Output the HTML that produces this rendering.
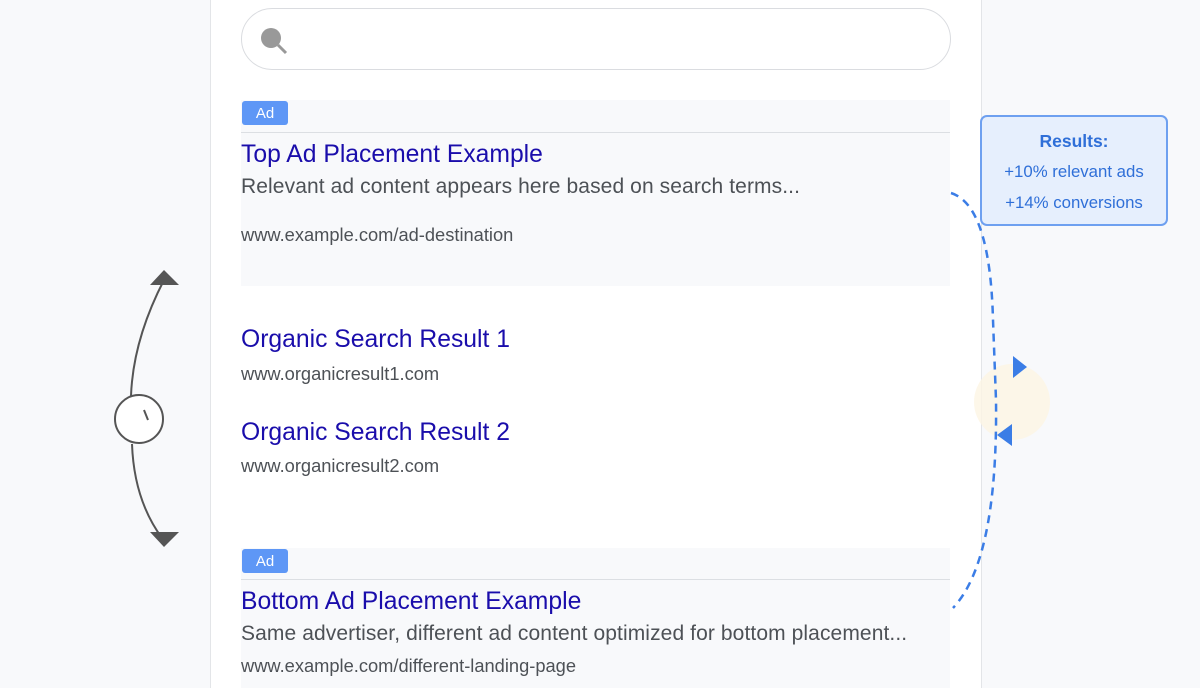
<!DOCTYPE html>
<html><head><style>
body{margin:0;width:1200px;height:675px;overflow:hidden;background:#f8f9fb;font-family:"Liberation Sans",sans-serif;position:relative}
.a{position:absolute;white-space:nowrap}
.panel{position:absolute;left:210px;top:-2px;width:770px;height:690px;background:#fff;border-left:1px solid #e3e5e8;border-right:1px solid #e3e5e8}
.search{position:absolute;left:241px;top:8px;width:708px;height:60px;border:1px solid #dadce0;border-radius:32px;background:#fff}
.adbox{position:absolute;left:241px;width:709px;background:#f8f9fb}
.ad{position:absolute;left:242px;width:46px;height:24px;background:#5e97f6;color:#fff;border-radius:3px;font-size:15px;text-align:center;line-height:25px}
.line{position:absolute;left:241px;width:709px;height:1px;background:#dcdfe3}
.t{color:#1a0dab;font-size:24.7px}
.d{color:#4d5156;font-size:21px;letter-spacing:0.1px}
.u{color:#4d5156;font-size:18.3px}
</style></head><body>
<div class="panel"></div>
<div class="search"></div>
<svg class="a" style="left:258px;top:26px" width="34" height="30"><circle cx="13" cy="12" r="10" fill="#999"/><line x1="20" y1="19" x2="28" y2="27" stroke="#999" stroke-width="3"/></svg>

<div class="adbox" style="top:100px;height:186px"></div>
<div class="ad" style="top:101px">Ad</div>
<div class="line" style="top:132px"></div>
<div class="a t" style="left:241px;top:141px">Top Ad Placement Example</div>
<div class="a d" style="left:241px;top:175px">Relevant ad content appears here based on search terms...</div>
<div class="a u" style="left:241px;top:224px">www.example.com/ad-destination</div>

<div class="a t" style="left:241px;top:326px">Organic Search Result 1</div>
<div class="a u" style="left:241px;top:363px">www.organicresult1.com</div>
<div class="a t" style="left:241px;top:419px">Organic Search Result 2</div>
<div class="a u" style="left:241px;top:455px">www.organicresult2.com</div>

<div class="adbox" style="top:548px;height:140px"></div>
<div class="ad" style="top:549px">Ad</div>
<div class="line" style="top:579px"></div>
<div class="a t" style="left:241px;top:588px">Bottom Ad Placement Example</div>
<div class="a d" style="left:241px;top:622px">Same advertiser, different ad content optimized for bottom placement...</div>
<div class="a u" style="left:241px;top:655px">www.example.com/different-landing-page</div>

<div class="a" style="left:980px;top:115px;width:184px;height:107px;border:2px solid #6ea0f0;border-radius:7px;background:#e6effd;color:#2f6fd8;text-align:center">
<div style="font-weight:bold;font-size:17.5px;margin-top:14px">Results:</div>
<div style="font-size:16.8px;margin-top:10px">+10% relevant ads</div>
<div style="font-size:16.8px;margin-top:11px">+14% conversions</div>
</div>

<svg class="a" style="left:0;top:0" width="1200" height="675">
<circle cx="1012" cy="402" r="38" fill="#fdf5e3" opacity="0.8"/>
<path d="M951 193 Q990 205 993 320 L996 400 Q998 560 953 608" fill="none" stroke="#3b7de6" stroke-width="2.5" stroke-dasharray="8 6"/>
<polygon points="1013,356 1013,378 1027,367" fill="#3b7de6"/>
<polygon points="1012,424 1012,446 997,435" fill="#3b7de6"/>
<path d="M164 280 Q133 340 131 396" fill="none" stroke="#555" stroke-width="2"/>
<path d="M132 444 Q134 500 162 538" fill="none" stroke="#555" stroke-width="2"/>
<polygon points="150,285 179,285 164,270" fill="#555"/>
<polygon points="150,532 179,532 164,547" fill="#555"/>
<circle cx="139" cy="419" r="24" fill="#fff" stroke="#555" stroke-width="2"/>
<line x1="144" y1="410" x2="148" y2="420" stroke="#555" stroke-width="2"/>
</svg>
</body></html>
